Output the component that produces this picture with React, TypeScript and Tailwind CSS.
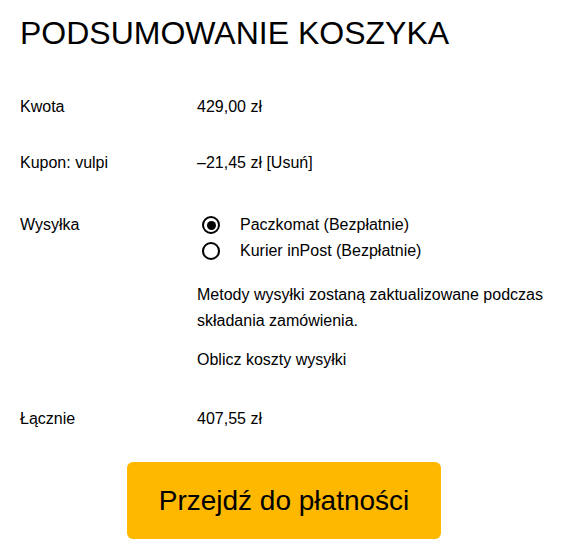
import React, { useState } from 'react';

const shippingOptions = ['Paczkomat (Bezpłatnie)', 'Kurier inPost (Bezpłatnie)'];

function Row({ label, children, className = '' }: { label: string; children: React.ReactNode; className?: string }) {
  return (
    <div className={`flex ${className}`}>
      <div className="w-[177px] shrink-0">{label}</div>
      <div className="flex-1">{children}</div>
    </div>
  );
}

export default function App() {
  const [shipping, setShipping] = useState(0);

  return (
    <div className="min-h-[556px] bg-white px-5 pt-[17px] text-black font-['Liberation_Sans',Arial,sans-serif]">
      <h2 className="text-[32px] leading-8 mb-[30px]">PODSUMOWANIE KOSZYKA</h2>

      <div className="text-[16px] leading-5">
        <Row label="Kwota" className="py-[18px]">
          429,00 zł
        </Row>
        <Row label="Kupon: vulpi" className="py-[18px]">
          –21,45 zł <a className="cursor-pointer">[Usuń]</a>
        </Row>
        <Row label="Wysyłka" className="pt-[21px] pb-[18px] leading-[26px]">
          <ul>
            {shippingOptions.map((opt, i) => (
              <li key={opt} className="flex items-center h-[26px] cursor-pointer" onClick={() => setShipping(i)}>
                <span className="ml-[5px] w-[18px] h-[18px] rounded-full border-2 border-black flex items-center justify-center shrink-0">
                  {shipping === i && <span className="w-[9px] h-[9px] rounded-full bg-black" />}
                </span>
                <span className="ml-[20px]">{opt}</span>
              </li>
            ))}
          </ul>
          <p className="leading-[26px] mt-[18px]">
            Metody wysyłki zostaną zaktualizowane podczas składania zamówienia.
          </p>
          <p className="leading-[26px] mt-[13px]">
            <a className="cursor-pointer">Oblicz koszty wysyłki</a>
          </p>
        </Row>
        <Row label="Łącznie" className="py-[18px]">
          407,55 zł
        </Row>
      </div>

      <button className="mt-[15px] ml-[107px] w-[314px] h-[77px] rounded-[6px] bg-[#ffb800] text-[28px] text-black">
        Przejdź do płatności
      </button>
    </div>
  );
}
